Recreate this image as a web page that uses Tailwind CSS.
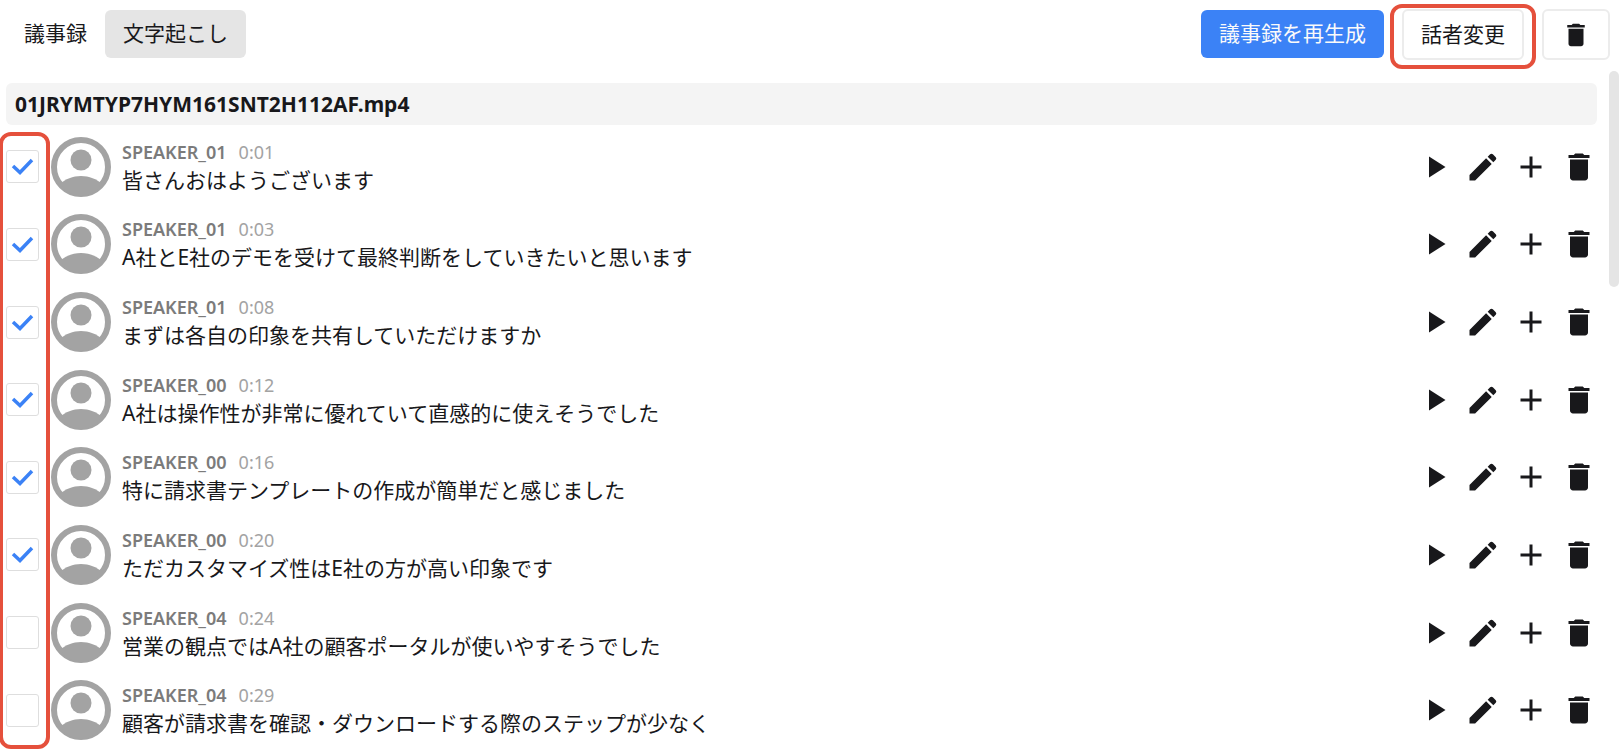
<!DOCTYPE html>
<html lang="ja">
<head>
<meta charset="utf-8">
<title>文字起こし</title>
<script src="https://cdn.jsdelivr.net/npm/@tailwindcss/browser@4"></script>
</head>
<body class="bg-white text-[#18181b]">
<svg class="hidden" aria-hidden="true">
  <symbol id="trash" viewBox="0 0 24 24"><path fill="currentColor" d="M6 19c0 1.1.9 2 2 2h8c1.1 0 2-.9 2-2V7H6v12zM19 4h-3.500l-1-1h-5l-1 1H5v2h14V4z"/></symbol>
  <symbol id="play" viewBox="0 0 24 24"><path fill="currentColor" d="M8 5v14l11-7z"/></symbol>
  <symbol id="pen" viewBox="0 0 24 24"><path fill="currentColor" d="M3 17.250V21h3.750L17.810 9.940l-3.750-3.750L3 17.250zM20.510 7.240a1.400 1.400 0 0 0 0-1.800l-1.950-1.950a1.400 1.400 0 0 0-1.800 0l-1.630 1.630 3.750 3.750z"/></symbol>
  <symbol id="plus" viewBox="0 0 24 24"><path fill="currentColor" d="M19 13h-6v6h-2v-6H5v-2h6V5h2v6h6z"/></symbol>
  <symbol id="user" viewBox="0 0 60 60"><circle cx="30" cy="30" r="27" fill="none" stroke="currentColor" stroke-width="6"/><circle cx="30" cy="23" r="10.500" fill="currentColor"/><path fill="currentColor" d="M9 47C14 42 22 39 30 39s16 3 21 8C46 55 38 59 30 59S14 55 9 47z"/></symbol>
</svg>
<div class="flex min-h-screen flex-col overflow-hidden font-['Noto_Sans','Noto_Sans_CJK_JP',sans-serif] text-[21px] leading-7">
  <header class="flex items-start justify-between pt-[9px] pr-[9px] pl-[6px]">
    <nav class="mt-px flex">
      <button class="h-12 rounded-md px-[18px] pb-[2px]">議事録</button>
      <button class="h-12 rounded-md bg-[#e5e5e5] px-[18px] pb-[2px]">文字起こし</button>
    </nav>
    <div class="flex items-start gap-[18px]">
      <button class="mt-px h-12 rounded-md bg-[#3b82f6] px-[18px] pb-[2px] text-[#fafafa]">議事録を再生成</button>
      <div class="relative">
        <button class="h-[51px] rounded-md border-2 border-[#ececec] px-[17px] pb-[2px]">話者変更</button>
        <span class="pointer-events-none absolute -inset-x-3 -top-[5px] -bottom-[9px] rounded-xl border-4 border-[#e5503c]"></span>
      </div>
      <button aria-label="削除" class="flex h-[51px] w-[68px] items-center justify-center rounded-md border-2 border-[#ececec]"><svg class="size-[30px]"><use href="#trash"/></svg></button>
    </div>
  </header>
  <main class="relative flex flex-1 flex-col pt-[23px] pr-[22px] pb-[6px] pl-[6px]">
    <h1 class="rounded-md bg-[#f4f4f4] px-[9px] py-[7px] text-[21px] font-bold">01JRYMTYP7HYM161SNT2H112AF.mp4</h1>
    <ul id="list" class="mt-[3px] flex flex-1 flex-col"></ul>
    <span class="pointer-events-none absolute top-[72px] bottom-[6px] -left-[1px] w-[51px] rounded-xl border-4 border-[#e5503c]"></span>
    <span class="absolute top-[11px] right-0 h-[216px] w-[10px] rounded-full bg-[#e5e5e5]"></span>
  </main>
</div>
<template id="row">
  <li class="flex flex-1 items-center">
    <label class="relative flex size-[33px] shrink-0">
      <input type="checkbox" aria-label="発言を選択" class="peer size-full appearance-none rounded-[3px] border border-[#dedede] bg-white">
      <svg viewBox="0 0 33 33" class="pointer-events-none absolute inset-0 hidden text-[#3b82f6] peer-checked:block"><path fill="none" stroke="currentColor" stroke-width="3.500" d="M7 16l7 6.500L26 10"/></svg>
    </label>
    <svg class="ml-3 size-[60px] shrink-0 text-[#a3a3a3]"><use href="#user"/></svg>
    <div class="ml-[11px] flex-1 pb-[2px]">
      <p class="flex h-7 items-center gap-3 text-[18px]"><b class="font-semibold text-[#7b7b7b]"></b><time class="text-[#a3a3a3]"></time></p>
      <p data-text class="h-7"></p>
    </div>
    <div class="flex gap-3">
      <button aria-label="再生"><svg class="size-9"><use href="#play"/></svg></button>
      <button aria-label="編集"><svg class="size-9"><use href="#pen"/></svg></button>
      <button aria-label="追加"><svg class="size-9"><use href="#plus"/></svg></button>
      <button aria-label="削除"><svg class="size-9"><use href="#trash"/></svg></button>
    </div>
  </li>
</template>
<script>
const rows = [
  ['01', '0:01', '皆さんおはようございます', true],
  ['01', '0:03', 'A社とE社のデモを受けて最終判断をしていきたいと思います', true],
  ['01', '0:08', 'まずは各自の印象を共有していただけますか', true],
  ['00', '0:12', 'A社は操作性が非常に優れていて直感的に使えそうでした', true],
  ['00', '0:16', '特に請求書テンプレートの作成が簡単だと感じました', true],
  ['00', '0:20', 'ただカスタマイズ性はE社の方が高い印象です', true],
  ['04', '0:24', '営業の観点ではA社の顧客ポータルが使いやすそうでした', false],
  ['04', '0:29', '顧客が請求書を確認・ダウンロードする際のステップが少なく', false],
];
for (const [speaker, time, text, checked] of rows) {
  const row = document.getElementById('row').content.cloneNode(true);
  row.querySelector('b').textContent = 'SPEAKER_' + speaker;
  row.querySelector('time').textContent = time;
  row.querySelector('[data-text]').textContent = text;
  row.querySelector('input').checked = checked;
  document.getElementById('list').append(row);
}
</script>
</body>
</html>
